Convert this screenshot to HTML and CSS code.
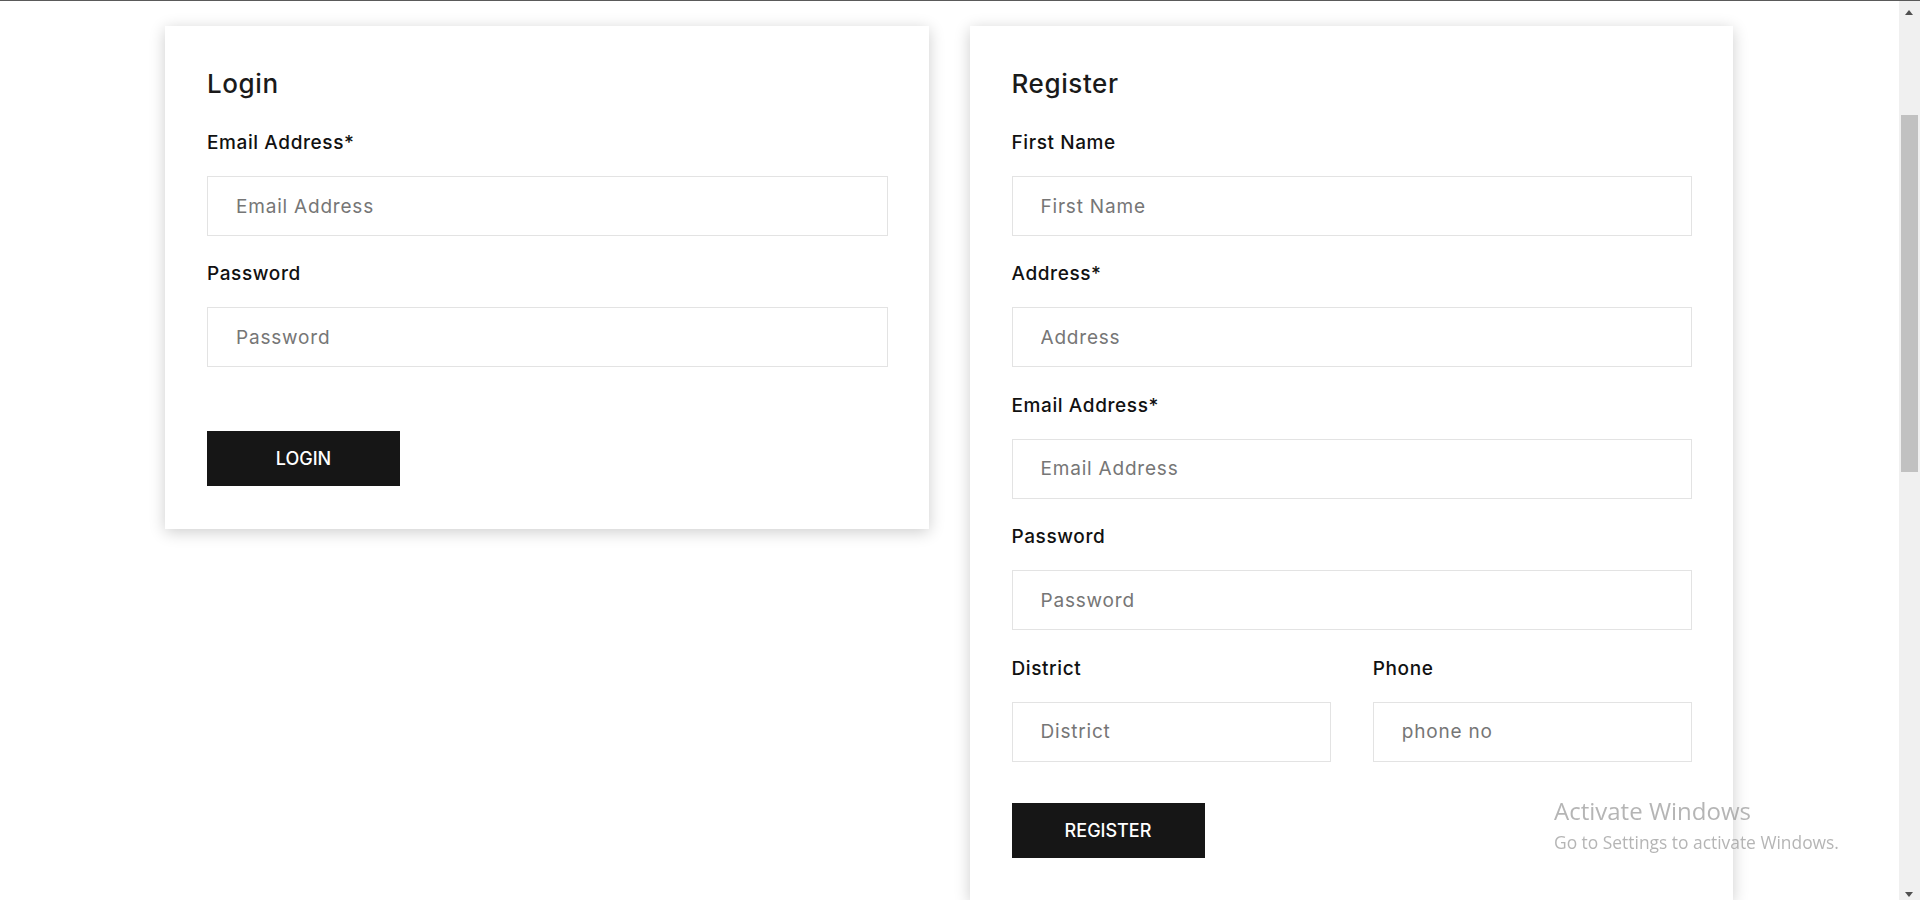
FILE: index.html
```html
<!DOCTYPE html>
<html lang="en">
<head>
<meta charset="utf-8">
<title>Login / Register</title>
<link rel="stylesheet" href="styles.css">
</head>
<body>
<div class="topline"></div>
<main class="page">
  <section class="card login">
    <h2 class="card-title">Login</h2>
    <form class="form">
      <div class="field">
        <label class="label">Email Address*</label>
        <input class="input" type="text" placeholder="Email Address">
      </div>
      <div class="field">
        <label class="label">Password</label>
        <input class="input" type="password" placeholder="Password">
      </div>
      <button class="btn btn-login" type="button">LOGIN</button>
    </form>
  </section>
  <section class="card register">
    <h2 class="card-title">Register</h2>
    <form class="form">
      <div class="field">
        <label class="label">First Name</label>
        <input class="input" type="text" placeholder="First Name">
      </div>
      <div class="field">
        <label class="label">Address*</label>
        <input class="input" type="text" placeholder="Address">
      </div>
      <div class="field">
        <label class="label">Email Address*</label>
        <input class="input" type="text" placeholder="Email Address">
      </div>
      <div class="field">
        <label class="label">Password</label>
        <input class="input" type="password" placeholder="Password">
      </div>
      <div class="field-row">
        <div class="field">
          <label class="label">District</label>
          <input class="input" type="text" placeholder="District">
        </div>
        <div class="field">
          <label class="label">Phone</label>
          <input class="input" type="text" placeholder="phone no">
        </div>
      </div>
      <button class="btn btn-register" type="button">REGISTER</button>
    </form>
  </section>
</main>
<div class="scrollbar">
  <span class="arrow arrow-up"></span>
  <span class="thumb"></span>
  <span class="arrow arrow-down"></span>
</div>
<div class="activate">
  <div class="activate-title">Activate Windows</div>
  <div class="activate-sub">Go to Settings to activate Windows.</div>
</div>
</body>
</html>
```
FILE: styles.css
```css
html, body {
  margin: 0;
  padding: 0;
  height: 900px;
  overflow: hidden;
  background: #ffffff;
}

body {
  font-family: "Inter", "Open Sans", sans-serif;
  color: #111111;
}

.topline {
  position: fixed;
  top: 0;
  left: 0;
  right: 0;
  height: 1px;
  background: #5a5a5a;
  z-index: 10;
}

.page {
  width: 1568px;
  margin-left: 165px;
  padding-top: 26px;
  display: flex;
  align-items: flex-start;
  gap: 41px;
}

.card {
  flex: 1 1 0;
  background: #ffffff;
  box-shadow: 0 3px 15px rgba(0, 0, 0, 0.2);
  padding: 42px 41px 43px 42px;
}

.card-title {
  margin: 0 0 31px;
  font-size: 26px;
  line-height: 32px;
  font-weight: 500;
  letter-spacing: 0.6px;
  color: #1a1a1a;
}

.form {
  display: flex;
  flex-direction: column;
  align-items: flex-start;
}

.field {
  display: flex;
  flex-direction: column;
  width: 100%;
  margin-bottom: 26.4px;
}

.field-row {
  display: flex;
  gap: 42px;
  width: 100%;
}

.field-row .field {
  flex: 1 1 0;
}

.label {
  font-size: 19px;
  line-height: 24px;
  font-weight: 500;
  letter-spacing: 0.6px;
  margin-bottom: 21px;
  color: #111111;
}

.input {
  box-sizing: border-box;
  width: 100%;
  height: 60px;
  border: 1px solid #e3e3e3;
  padding: 0 20px 0 28px;
  font-family: "Inter", "Open Sans", sans-serif;
  font-size: 19px;
  letter-spacing: 0.8px;
  color: #333333;
  background: #ffffff;
  outline: none;
}

.input::placeholder {
  color: #767676;
  opacity: 1;
}

.btn {
  width: 193px;
  height: 55px;
  border: none;
  background: #161616;
  color: #ffffff;
  font-family: "Inter", "Open Sans", sans-serif;
  font-size: 18px;
  font-weight: 500;
  padding: 0;
  cursor: pointer;
}

.btn-login {
  margin-top: 37.6px;
}

.btn-register {
  margin-top: 15px;
}

.scrollbar {
  position: fixed;
  top: 1px;
  right: 0;
  width: 21px;
  height: 899px;
  background: #f0f0f0;
}

.thumb {
  position: absolute;
  left: 2px;
  top: 114px;
  width: 17px;
  height: 357px;
  background: #c1c1c1;
}

.arrow {
  position: absolute;
  left: 6px;
  width: 0;
  height: 0;
  border-left: 4px solid transparent;
  border-right: 4px solid transparent;
}

.arrow-up {
  top: 9px;
  border-bottom: 5px solid #505050;
}

.arrow-down {
  bottom: 3px;
  border-top: 5px solid #505050;
}

.activate {
  position: fixed;
  left: 1554px;
  top: 795px;
  font-family: "Open Sans", "DejaVu Sans", sans-serif;
  color: rgba(150, 150, 150, 0.7);
  pointer-events: none;
}

.activate-title {
  font-size: 24px;
  line-height: 32px;
}

.activate-sub {
  font-size: 17.4px;
  line-height: 24px;
  margin-top: 3px;
}
```
